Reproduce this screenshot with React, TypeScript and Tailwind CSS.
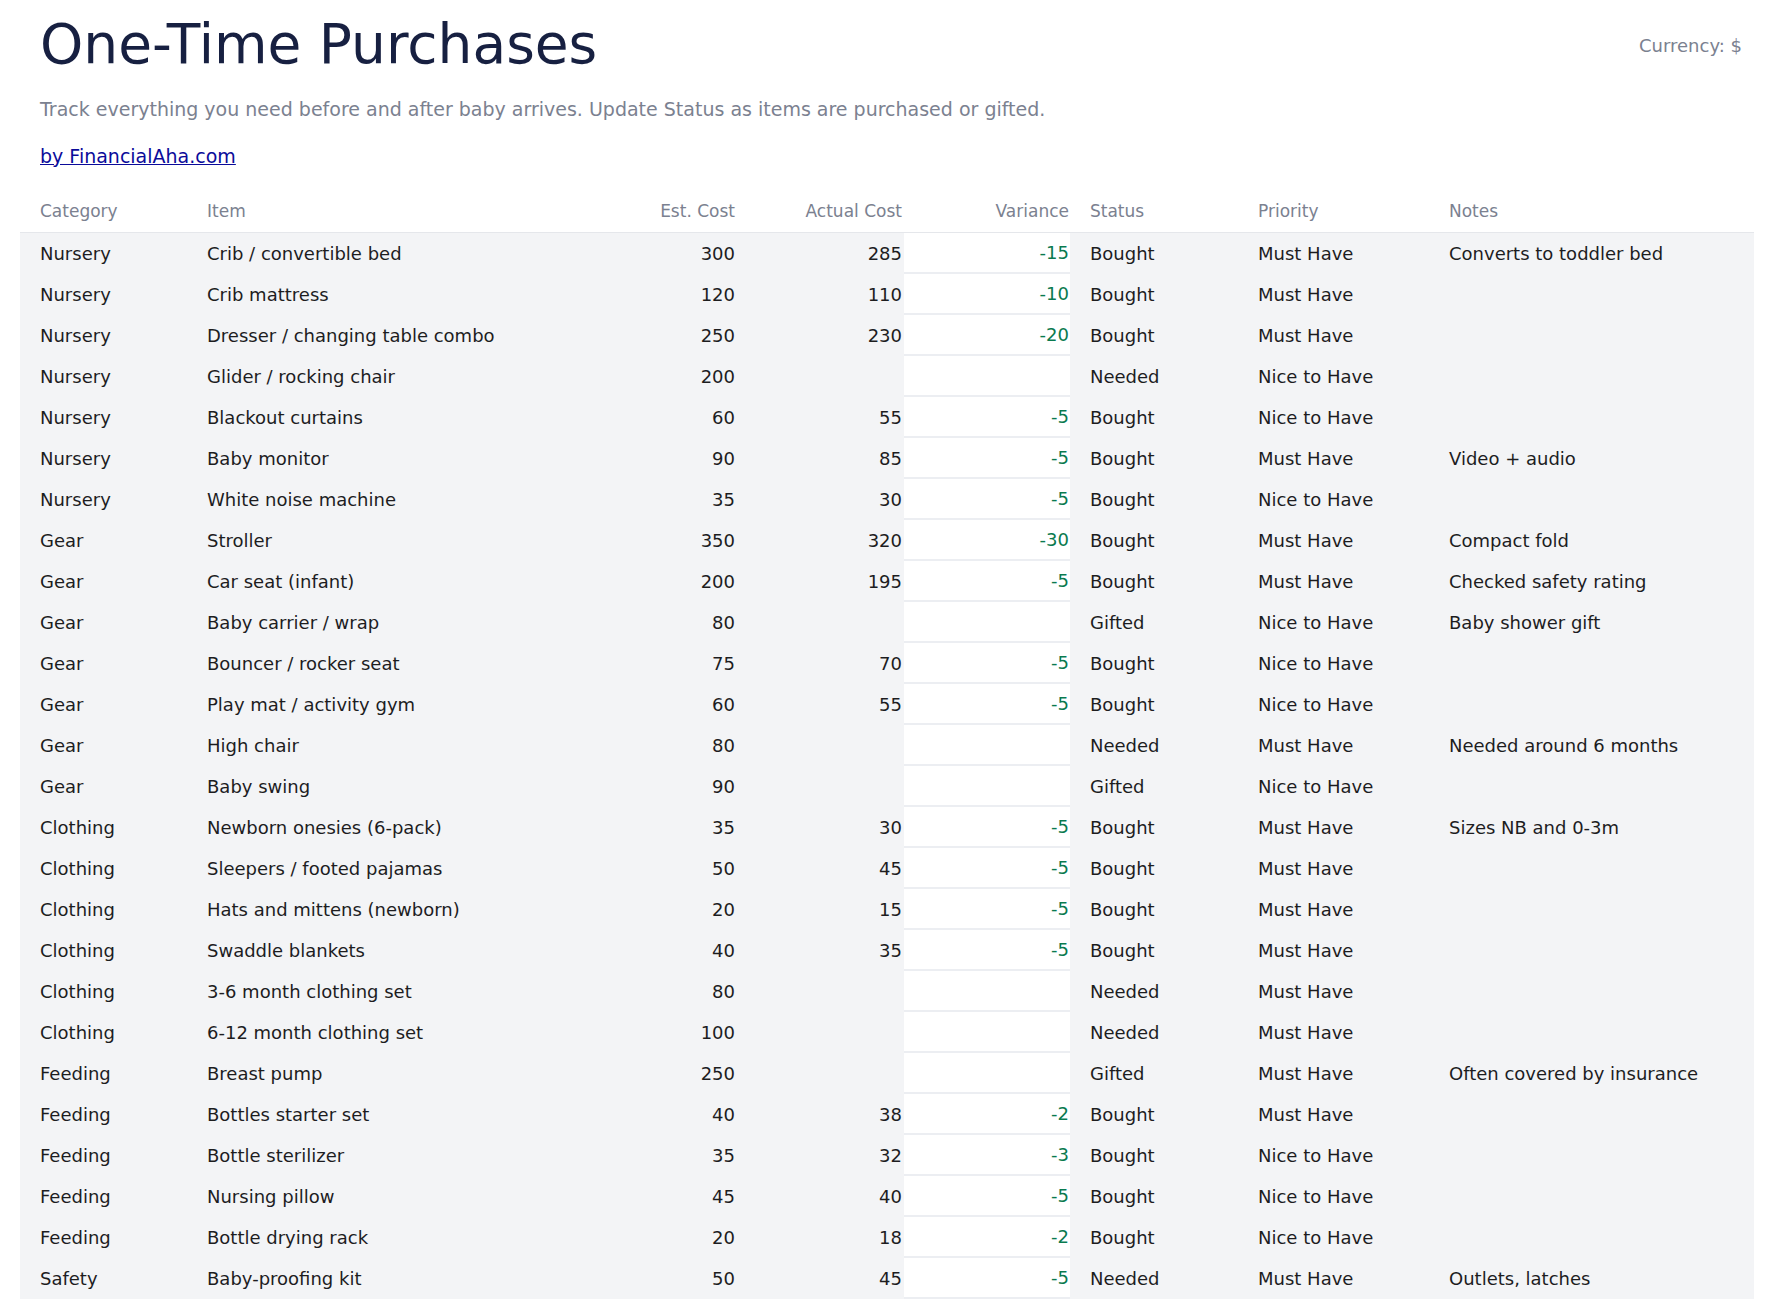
const rows: [string,string,string,string,string,string,string,string][] = [
["Nursery","Crib / convertible bed","300","285","-15","Bought","Must Have","Converts to toddler bed"],
["Nursery","Crib mattress","120","110","-10","Bought","Must Have",""],
["Nursery","Dresser / changing table combo","250","230","-20","Bought","Must Have",""],
["Nursery","Glider / rocking chair","200","","","Needed","Nice to Have",""],
["Nursery","Blackout curtains","60","55","-5","Bought","Nice to Have",""],
["Nursery","Baby monitor","90","85","-5","Bought","Must Have","Video + audio"],
["Nursery","White noise machine","35","30","-5","Bought","Nice to Have",""],
["Gear","Stroller","350","320","-30","Bought","Must Have","Compact fold"],
["Gear","Car seat (infant)","200","195","-5","Bought","Must Have","Checked safety rating"],
["Gear","Baby carrier / wrap","80","","","Gifted","Nice to Have","Baby shower gift"],
["Gear","Bouncer / rocker seat","75","70","-5","Bought","Nice to Have",""],
["Gear","Play mat / activity gym","60","55","-5","Bought","Nice to Have",""],
["Gear","High chair","80","","","Needed","Must Have","Needed around 6 months"],
["Gear","Baby swing","90","","","Gifted","Nice to Have",""],
["Clothing","Newborn onesies (6-pack)","35","30","-5","Bought","Must Have","Sizes NB and 0-3m"],
["Clothing","Sleepers / footed pajamas","50","45","-5","Bought","Must Have",""],
["Clothing","Hats and mittens (newborn)","20","15","-5","Bought","Must Have",""],
["Clothing","Swaddle blankets","40","35","-5","Bought","Must Have",""],
["Clothing","3-6 month clothing set","80","","","Needed","Must Have",""],
["Clothing","6-12 month clothing set","100","","","Needed","Must Have",""],
["Feeding","Breast pump","250","","","Gifted","Must Have","Often covered by insurance"],
["Feeding","Bottles starter set","40","38","-2","Bought","Must Have",""],
["Feeding","Bottle sterilizer","35","32","-3","Bought","Nice to Have",""],
["Feeding","Nursing pillow","45","40","-5","Bought","Nice to Have",""],
["Feeding","Bottle drying rack","20","18","-2","Bought","Nice to Have",""],
["Safety","Baby-proofing kit","50","45","-5","Needed","Must Have","Outlets, latches"],
];

const grid = "grid grid-cols-[167px_368px_200px_149px_166px_168px_191px_333px]";

export default function App() {
  return (
    <div className="w-[1774px] min-h-[1304px] bg-white" style={{fontFamily: '"DejaVu Sans", sans-serif'}}>
      <div className="flex justify-between items-start pl-[40px] pr-[32px] pt-[10px]">
        <h1 className="text-[55px] leading-[68px] text-[#172041]">One-Time Purchases</h1>
        <div className="text-[18px] text-[#7b8190] mt-[22px]">Currency: $</div>
      </div>
      <p className="pl-[40px] mt-[17px] text-[19px] text-[#7b8190]">Track everything you need before and after baby arrives. Update Status as items are purchased or gifted.</p>
      <a className="block pl-[40px] mt-[18px] text-[19px] text-[#0b0b9a] underline w-fit" href="#">by FinancialAha.com</a>
      <div className="mx-[20px] mt-[22px]">
        <div className={`${grid} h-[41px] items-center text-[17px] text-[#7b8190] border-b border-[#e5e7eb]`}>
          <div className="pl-[20px]">Category</div>
          <div className="pl-[20px]">Item</div>
          <div className="pr-[20px] text-right">Est. Cost</div>
          <div className="pr-[2px] text-right">Actual Cost</div>
          <div className="pr-[1px] text-right">Variance</div>
          <div className="pl-[20px]">Status</div>
          <div className="pl-[20px]">Priority</div>
          <div className="pl-[20px]">Notes</div>
        </div>
        {rows.map((r, i) => (
          <div key={i} className={`${grid} h-[41px] items-stretch text-[18px] text-[#1d1d1f] bg-[#f3f4f6]`}>
            <div className="pl-[20px] flex items-center">{r[0]}</div>
            <div className="pl-[20px] flex items-center">{r[1]}</div>
            <div className="pr-[20px] flex items-center justify-end">{r[2]}</div>
            <div className="pr-[2px] flex items-center justify-end">{r[3]}</div>
            <div className="pr-[1px] flex items-center justify-end bg-white border-b-2 border-[#eceef2] text-[#0a7a4f]">{r[4]}</div>
            <div className="pl-[20px] flex items-center">{r[5]}</div>
            <div className="pl-[20px] flex items-center">{r[6]}</div>
            <div className="pl-[20px] flex items-center">{r[7]}</div>
          </div>
        ))}
      </div>
    </div>
  );
}
